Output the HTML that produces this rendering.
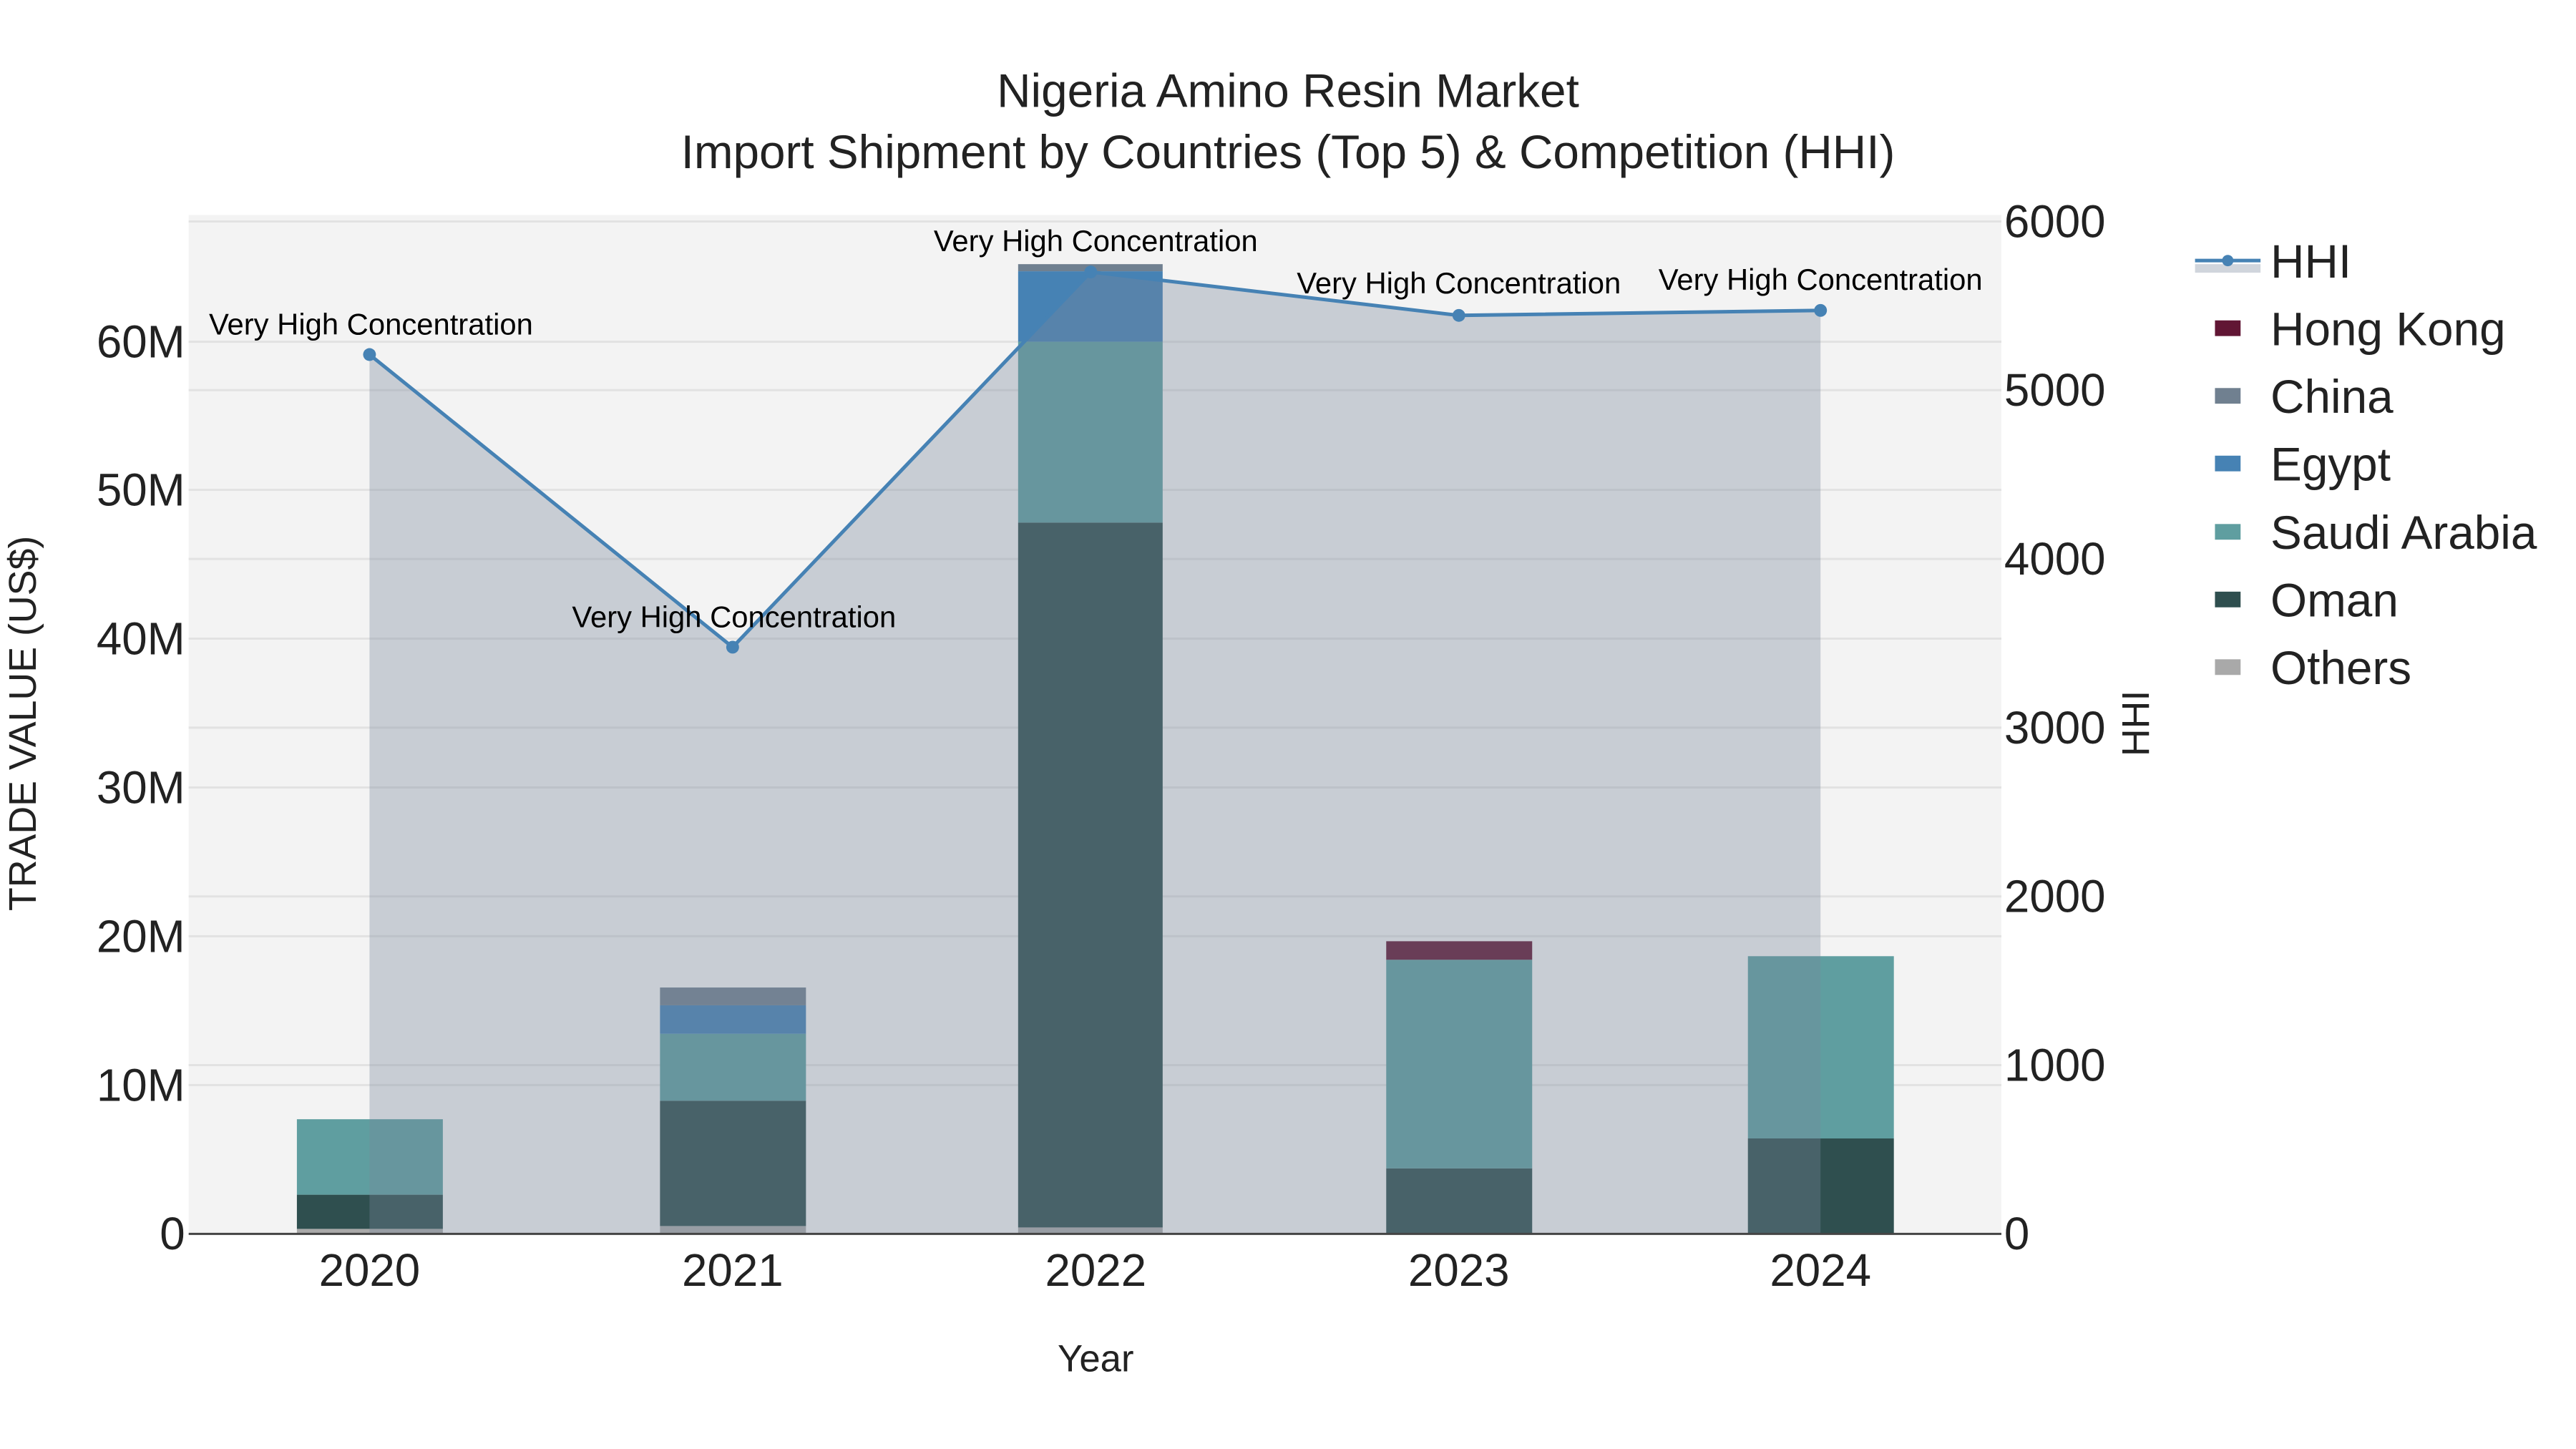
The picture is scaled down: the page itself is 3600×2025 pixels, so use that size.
<!DOCTYPE html>
<html><head><meta charset="utf-8"><style>
html,body{margin:0;padding:0;background:#fff;}
svg{display:block;font-family:"Liberation Sans",Arial,sans-serif;}
</style></head><body>
<svg width="3600" height="2025" viewBox="0 0 3600 2025" xmlns="http://www.w3.org/2000/svg">
<rect width="3600" height="2025" fill="#fff"/>
<g transform="scale(0.995)">
<rect x="265" y="302" width="2546" height="1431" fill="#f3f3f3"/>
<g stroke="#e2e2e2" stroke-width="3">
<line x1="265" x2="2811" y1="1524" y2="1524"/><line x1="265" x2="2811" y1="1315" y2="1315"/>
<line x1="265" x2="2811" y1="1106" y2="1106"/><line x1="265" x2="2811" y1="897" y2="897"/>
<line x1="265" x2="2811" y1="688" y2="688"/><line x1="265" x2="2811" y1="480" y2="480"/>
<line x1="265" x2="2811" y1="1496" y2="1496"/><line x1="265" x2="2811" y1="1259" y2="1259"/>
<line x1="265" x2="2811" y1="1022" y2="1022"/><line x1="265" x2="2811" y1="785" y2="785"/>
<line x1="265" x2="2811" y1="548" y2="548"/><line x1="265" x2="2811" y1="311" y2="311"/>
</g>
<g>
<rect x="417" y="1726" width="205" height="7" fill="#a9a9a9"/>
<rect x="417" y="1678" width="205" height="48" fill="#2f4f4f"/>
<rect x="417" y="1572" width="205" height="106" fill="#5f9ea0"/>

<rect x="927" y="1722" width="205" height="11" fill="#a9a9a9"/>
<rect x="927" y="1546" width="205" height="176" fill="#2f4f4f"/>
<rect x="927" y="1452" width="205" height="94" fill="#5f9ea0"/>
<rect x="927" y="1412" width="205" height="40" fill="#4682b4"/>
<rect x="927" y="1387" width="205" height="25" fill="#708090"/>

<rect x="1430" y="1724" width="203" height="9" fill="#a9a9a9"/>
<rect x="1430" y="734" width="203" height="990" fill="#2f4f4f"/>
<rect x="1430" y="480" width="203" height="254" fill="#5f9ea0"/>
<rect x="1430" y="381" width="203" height="99" fill="#4682b4"/>
<rect x="1430" y="371" width="203" height="10" fill="#708090"/>

<rect x="1947" y="1641" width="205" height="92" fill="#2f4f4f"/>
<rect x="1947" y="1348" width="205" height="293" fill="#5f9ea0"/>
<rect x="1947" y="1322" width="205" height="26" fill="#611634"/>

<rect x="2455" y="1599" width="205" height="134" fill="#2f4f4f"/>
<rect x="2455" y="1343" width="205" height="256" fill="#5f9ea0"/>
</g>
<polygon points="519,498 1029,909 1532,382 2049,443 2557,436 2557,1733 519,1733" fill="rgba(120,134,154,0.35)"/>
<polyline points="519,498 1029,909 1532,382 2049,443 2557,436" fill="none" stroke="#4682b4" stroke-width="5"/>
<g fill="#4682b4">
<circle cx="519" cy="498" r="9"/><circle cx="1029" cy="909" r="9"/><circle cx="1532" cy="382" r="9"/><circle cx="2049" cy="443" r="9"/><circle cx="2557" cy="436" r="9"/>
</g>
<line x1="265" x2="2811" y1="1733" y2="1733" stroke="#444" stroke-width="3"/>
<g font-size="42" text-anchor="middle" fill="#000">
<text x="521" y="470">Very High Concentration</text>
<text x="1031" y="881">Very High Concentration</text>
<text x="1539" y="353">Very High Concentration</text>
<text x="2049" y="412">Very High Concentration</text>
<text x="2557" y="407">Very High Concentration</text>
</g>
<g font-size="66" text-anchor="middle" fill="#222">
<text x="1809" y="150">Nigeria Amino Resin Market</text>
<text x="1809" y="236">Import Shipment by Countries (Top 5) &amp; Competition (HHI)</text>
</g>
<g font-size="64" text-anchor="end" fill="#222">
<text x="260" y="1755">0</text>
<text x="260" y="1546">10M</text>
<text x="260" y="1337">20M</text>
<text x="260" y="1128">30M</text>
<text x="260" y="919">40M</text>
<text x="260" y="710">50M</text>
<text x="260" y="502">60M</text>
</g>
<g font-size="64" text-anchor="start" fill="#222">
<text x="2815" y="1755">0</text>
<text x="2815" y="1518">1000</text>
<text x="2815" y="1281">2000</text>
<text x="2815" y="1044">3000</text>
<text x="2815" y="807">4000</text>
<text x="2815" y="570">5000</text>
<text x="2815" y="333">6000</text>
</g>
<g font-size="64" text-anchor="middle" fill="#222">
<text x="519" y="1806">2020</text>
<text x="1029" y="1806">2021</text>
<text x="1539" y="1806">2022</text>
<text x="2049" y="1806">2023</text>
<text x="2557" y="1806">2024</text>
</g>
<text x="1539" y="1926" font-size="53" text-anchor="middle" fill="#222">Year</text>
<text transform="translate(50,1016) rotate(-90)" font-size="54" text-anchor="middle" fill="#222">TRADE VALUE (US$)</text>
<text transform="translate(3018,1016) rotate(-90)" font-size="54" text-anchor="middle" fill="#222">HHI</text>
<rect x="3083" y="371" width="92" height="12" fill="rgba(120,134,154,0.35)"/>
<line x1="3083" x2="3175" y1="366" y2="366" stroke="#4682b4" stroke-width="5"/>
<circle cx="3129" cy="366" r="8" fill="#4682b4"/>
<g>
<rect x="3111" y="450" width="36" height="22" fill="#611634"/>
<rect x="3111" y="545" width="36" height="22" fill="#708090"/>
<rect x="3111" y="640" width="36" height="22" fill="#4682b4"/>
<rect x="3111" y="736" width="36" height="22" fill="#5f9ea0"/>
<rect x="3111" y="831" width="36" height="22" fill="#2f4f4f"/>
<rect x="3111" y="926" width="36" height="22" fill="#a9a9a9"/>
</g>
<g font-size="66" fill="#222">
<text x="3189" y="390">HHI</text>
<text x="3189" y="485">Hong Kong</text>
<text x="3189" y="580">China</text>
<text x="3189" y="675">Egypt</text>
<text x="3189" y="771">Saudi Arabia</text>
<text x="3189" y="866">Oman</text>
<text x="3189" y="961">Others</text>
</g>
</g>
</svg>
</body></html>
